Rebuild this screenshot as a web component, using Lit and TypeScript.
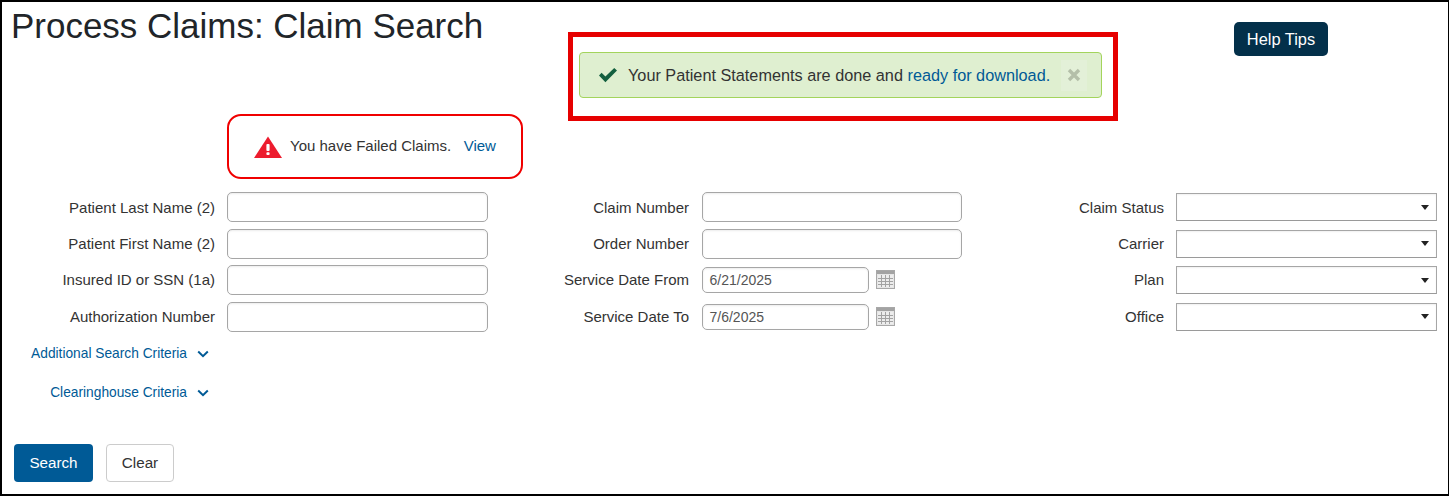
import { LitElement, html, css, svg } from "lit";
import { customElement } from "lit/decorators.js";

const FONT = css`"Liberation Sans", Arial, sans-serif`;

@customElement("app-root")
export class AppRoot extends LitElement {
  static styles = css`
    :host {
      display: block;
      box-sizing: border-box;
      width: 1449px;
      height: 496px;
      border: 2px solid #000;
      border-right-width: 1px;
      background: #fff;
      font-family: ${FONT};
      font-size: 15px;
      color: #333;
      overflow: hidden;
    }
    .top {
      display: flex;
      align-items: flex-start;
      height: 112px;
    }
    h1 {
      margin: 5px 0 0 9px;
      width: 557px;
      flex: none;
      font-size: 34.97px;
      line-height: 38px;
      font-weight: 400;
      color: #212529;
    }
    .highlight {
      box-sizing: border-box;
      width: 550px;
      height: 89px;
      margin-top: 30px;
      border: 5px solid #e60000;
      padding: 15px 0 0 6px;
      flex: none;
    }
    .success {
      box-sizing: border-box;
      width: 523px;
      height: 46px;
      background: #dfefd0;
      border: 1px solid #a3d45c;
      border-radius: 4px;
      display: flex;
      align-items: center;
      padding-left: 18px;
      color: #333;
    }
    .success .text {
      margin-left: 10px;
      font-size: 16.25px;
      white-space: nowrap;
    }
    a {
      color: #005a96;
      text-decoration: none;
    }
    .close {
      margin-left: 11px;
      width: 26px;
      height: 31px;
      background: #e3f0d8;
      display: flex;
      align-items: center;
      justify-content: center;
    }
    .help {
      margin: 20px 0 0 116px;
      width: 94px;
      height: 34px;
      box-sizing: border-box;
      background: #03304a;
      color: #fff;
      border: 0;
      border-radius: 5px;
      font: 400 16.4px ${FONT};
      padding: 0;
    }
    .failed {
      box-sizing: border-box;
      margin-left: 225px;
      width: 296px;
      height: 65px;
      border: 2px solid #f00000;
      border-radius: 14px;
      display: flex;
      align-items: center;
      padding-left: 25px;
      padding-bottom: 2px;
      white-space: nowrap;
    }
    .failed svg {
      margin-top: 3px;
    }
    .failed .msg {
      margin-left: 8px;
    }
    .failed a {
      margin-left: 12.5px;
    }
    form {
      margin-top: 13.2px;
      display: grid;
      grid-template-columns: 225px 261px 214px 260px 214px 261px;
      grid-auto-rows: 36.6px;
      align-items: start;
    }
    label {
      text-align: right;
      padding-right: 12px;
      line-height: 30px;
      white-space: nowrap;
    }
    label.first {
      line-height: 32px;
    }
    form label.mid {
      padding-right: 13px;
    }
    .inp {
      box-sizing: border-box;
      display: block;
      width: 100%;
      height: 30px;
      border: 1px solid #a6a6a6;
      border-radius: 5px;
      background: #fff;
      box-shadow: inset 0 1px 2px rgba(0, 0, 0, 0.08);
    }
    .date {
      display: flex;
      align-items: flex-start;
      gap: 7px;
    }
    .date .inp {
      width: 167px;
      height: 26px;
      margin-top: 2px;
      padding-left: 6.5px;
      font-size: 14px;
      line-height: 24px;
      color: #555;
    }
    .date svg {
      margin-top: 5px;
    }
    .sel {
      box-sizing: border-box;
      width: 261px;
      height: 28px;
      margin-top: 1px;
      border: 1px solid #a6a6a6;
      border-bottom-color: #9a9a9a;
      background: #fff;
      display: flex;
      align-items: center;
      justify-content: flex-end;
      padding-right: 7px;
      box-shadow: inset 0 1px 2px rgba(0, 0, 0, 0.06);
    }
    .tri {
      width: 0;
      height: 0;
      border-left: 4.5px solid transparent;
      border-right: 4.5px solid transparent;
      border-top: 5px solid #222;
    }
    .more {
      display: flex;
      flex-direction: column;
      width: 207px;
      align-items: flex-end;
      margin-top: 6.8px;
      gap: 21px;
    }
    .more a {
      display: flex;
      align-items: center;
      gap: 10px;
      font-size: 13.75px;
      line-height: 18px;
      white-space: nowrap;
    }
    .actions {
      display: flex;
      gap: 13px;
      margin: 42px 0 0 12px;
    }
    .actions button {
      box-sizing: border-box;
      height: 38px;
      border-radius: 4px;
      font: 400 15.2px ${FONT};
      padding: 0 0 2px;
    }
    .search {
      width: 79px;
      background: #005a96;
      color: #fff;
      border: 0;
    }
    .clear {
      width: 68px;
      background: #fff;
      color: #333;
      border: 1px solid #ccc;
    }
  `;

  private chevron() {
    return html`<svg width="12" height="8" viewBox="0 0 12 8" aria-hidden="true">
      <path d="M1.2 1.5 6 6.2l4.8-4.7" fill="none" stroke="#005a96" stroke-width="2"/>
    </svg>`;
  }

  private calendar() {
    const lines = [];
    for (const x of [5.5, 9.5, 13.5]) lines.push(svg`<path d="M${x} 5v12" stroke="#a3a3a3"/>`);
    for (const y of [8.5, 11.5, 14.5]) lines.push(svg`<path d="M2 ${y}h15" stroke="#a3a3a3"/>`);
    return html`<svg width="19" height="19" viewBox="0 0 19 19" aria-hidden="true">
      <rect x="0.5" y="0.5" width="18" height="18" fill="#e6e6e6" stroke="#a8a8a8"/>
      <rect x="1" y="1" width="17" height="3" fill="#a3a3a3"/>
      <rect x="2" y="5" width="15" height="12" fill="#ededed"/>
      ${lines}
    </svg>`;
  }

  render() {
    return html`
      <div class="top">
        <h1>Process Claims: Claim Search</h1>
        <div class="highlight">
          <div class="success">
            <svg width="20" height="16" viewBox="0 0 20 16" aria-hidden="true">
              <path d="M1 8.4 3.6 5.8 7.4 9.6 16.2 0.9 19 3.6 7.4 15.2z" fill="#14603f"/>
            </svg>
            <span class="text">Your Patient Statements are done and <a href="#">ready for download.</a></span>
            <span class="close">
              <svg width="14" height="14" viewBox="0 0 14 14" aria-hidden="true">
                <path d="M2 2l10 10M12 2 2 12" stroke="#b4bfa9" stroke-width="3.4" fill="none"/>
              </svg>
            </span>
          </div>
        </div>
        <button class="help">Help Tips</button>
      </div>

      <div class="failed">
        <svg width="28" height="22" viewBox="0 0 28 22" aria-hidden="true">
          <path d="M14 0.5 28 22H0z" fill="#ed1c2e"/>
          <rect x="12.4" y="8" width="3.2" height="7" rx="1" fill="#fff"/>
          <rect x="12.4" y="16.2" width="3.2" height="2.8" rx="1" fill="#fff"/>
        </svg>
        <span class="msg">You have Failed Claims.</span>
        <a href="#">View</a>
      </div>

      <form>
        <label class="first">Patient Last Name (2)</label><div class="inp"></div>
        <label class="mid first">Claim Number</label><div class="inp"></div>
        <label class="first">Claim Status</label><div class="sel"><span class="tri"></span></div>

        <label>Patient First Name (2)</label><div class="inp"></div>
        <label class="mid">Order Number</label><div class="inp"></div>
        <label>Carrier</label><div class="sel"><span class="tri"></span></div>

        <label>Insured ID or SSN (1a)</label><div class="inp"></div>
        <label class="mid">Service Date From</label>
        <div class="date"><div class="inp">6/21/2025</div>${this.calendar()}</div>
        <label>Plan</label><div class="sel"><span class="tri"></span></div>

        <label>Authorization Number</label><div class="inp"></div>
        <label class="mid">Service Date To</label>
        <div class="date"><div class="inp">7/6/2025</div>${this.calendar()}</div>
        <label>Office</label><div class="sel"><span class="tri"></span></div>
      </form>

      <div class="more">
        <a href="#">Additional Search Criteria ${this.chevron()}</a>
        <a href="#">Clearinghouse Criteria ${this.chevron()}</a>
      </div>

      <div class="actions">
        <button class="search">Search</button>
        <button class="clear">Clear</button>
      </div>
    `;
  }
}
